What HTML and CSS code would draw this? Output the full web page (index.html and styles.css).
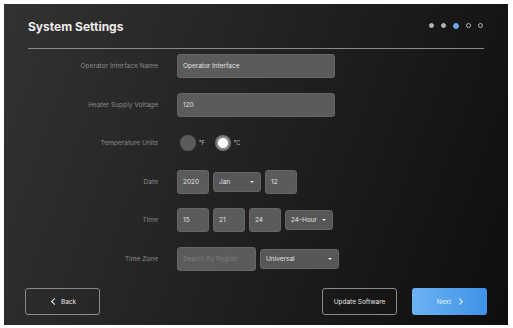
FILE: index.html
```html
<!DOCTYPE html>
<html lang="en">
<head>
    <meta charset="UTF-8">
    <meta name="viewport" content="width=device-width, initial-scale=1.0">
    <title>System Settings</title>
    <link rel="stylesheet" href="styles.css">
</head>
<body>
    <div class="panel">
        <div class="header">
            <h1>System Settings</h1>
            <div class="steps">
                <span class="dot done"></span>
                <span class="dot done"></span>
                <span class="dot active"></span>
                <span class="dot"></span>
                <span class="dot"></span>
            </div>
        </div>
        <div class="divider"></div>

        <form class="settings">
            <label class="label">Operator Interface Name</label>
            <div class="field"><div class="box wide">Operator Interface</div></div>

            <label class="label">Heater Supply Voltage</label>
            <div class="field"><div class="box wide">120</div></div>

            <label class="label">Temperature Units</label>
            <div class="field">
                <span class="radio"></span><span class="unit">°F</span>
                <span class="radio checked"></span><span class="unit">°C</span>
            </div>

            <label class="label">Date</label>
            <div class="field">
                <div class="box num">2020</div>
                <div class="box select month">Jan <span class="caret"></span></div>
                <div class="box num">12</div>
            </div>

            <label class="label">Time</label>
            <div class="field">
                <div class="box num">15</div>
                <div class="box num">21</div>
                <div class="box num">24</div>
                <div class="box select hours">24-Hour <span class="caret"></span></div>
            </div>

            <label class="label">Time Zone</label>
            <div class="field">
                <div class="box search">Search By Region</div>
                <div class="box select zone">Universal <span class="caret"></span></div>
            </div>
        </form>

        <div class="footer">
            <button type="button" class="btn outline back"><span class="chev left"></span>Back</button>
            <div class="footer-right">
                <button type="button" class="btn outline">Update Software</button>
                <button type="button" class="btn primary">Next<span class="chev right"></span></button>
            </div>
        </div>
    </div>
</body>
</html>
```

FILE: styles.css
```css
body {
    margin: 0;
    background-color: #fff;
    font-family: 'Inter', 'Noto Sans', sans-serif;
}
.panel {
    margin: 4px 5px 3px 4px;
    height: 321px;
    box-sizing: border-box;
    padding: 0 24px;
    background: linear-gradient(110deg, #323232 0%, #242424 40%, #171717 75%, #0e0e0e 100%);
    display: flex;
    flex-direction: column;
}
.header {
    height: 43px;
    display: flex;
    align-items: center;
    justify-content: space-between;
}
.header h1 {
    margin: 0;
    font-size: 12px;
    font-weight: 700;
    color: #ececec;
    padding-top: 2px;
}
.steps {
    display: flex;
    gap: 7px;
    margin-right: 1px;
}
.dot {
    width: 5px;
    height: 5px;
    border-radius: 50%;
    box-sizing: border-box;
    border: 1px solid #b5b5b5;
}
.dot.done {
    background-color: #b5b5b5;
}
.dot.active {
    background-color: #6aa9ee;
    border-color: #6aa9ee;
    width: 6px;
    height: 6px;
}
.divider {
    height: 1px;
    background-color: #8a8a8a;
    margin-top: 1px;
}
.settings {
    display: grid;
    grid-template-columns: 130px 1fr;
    column-gap: 19px;
    row-gap: 14.5px;
    margin-top: 5px;
    grid-auto-rows: 24px;
}
.label {
    font-size: 6.6px;
    color: #8a8a8a;
    text-align: right;
    align-self: center;
}
.field {
    display: flex;
    align-items: center;
    gap: 4px;
}
.box {
    height: 24px;
    box-sizing: border-box;
    background-color: #5b5b5b;
    border: 1px solid #666;
    border-radius: 3px;
    color: #e2e2e2;
    font-size: 6.5px;
    padding: 0 5px;
    display: flex;
    align-items: center;
}
.box.wide {
    width: 158px;
}
.box.num {
    width: 32px;
}
.box.select {
    height: 20px;
    justify-content: space-between;
    padding-right: 6px;
    background-color: #575757;
}
.box.month {
    width: 48px;
}
.box.hours {
    width: 48px;
}
.box.search {
    width: 79px;
    color: #7d7d7d;
}
.box.zone {
    width: 79px;
}
.caret {
    width: 0;
    height: 0;
    border-left: 2px solid transparent;
    border-right: 2px solid transparent;
    border-top: 2px solid #eee;
}
.radio {
    width: 16px;
    height: 16px;
    border-radius: 50%;
    background-color: #5b5b5b;
    margin-left: 3px;
    box-sizing: border-box;
}
.radio.checked {
    margin-left: 6px;
    background: radial-gradient(circle, #fff 0, #fff 4.5px, #8a8a8a 5.5px, #6d6d6d 8px);
}
.unit {
    font-size: 5.5px;
    color: #bbb;
    margin-left: -1px;
}
.footer {
    margin-top: auto;
    margin-bottom: 10px;
    margin-left: -3px;
    margin-right: -3px;
    display: flex;
    justify-content: space-between;
}
.footer-right {
    display: flex;
    gap: 15px;
}
.btn {
    width: 75px;
    height: 27px;
    border-radius: 3px;
    font-family: inherit;
    font-size: 6.5px;
    color: #e6e6e6;
    display: flex;
    align-items: center;
    justify-content: center;
    gap: 4px;
    padding: 0;
    cursor: pointer;
}
.btn.outline {
    background: transparent;
    border: 1px solid #8a8a8a;
}
.btn.primary {
    width: 75px;
    border: none;
    background: linear-gradient(90deg, #6cb3f3, #3f92e8);
    color: #eaf4ff;
}
.chev {
    width: 4px;
    height: 4px;
    border-top: 1.2px solid #eee;
    border-left: 1.2px solid #eee;
}
.chev.left {
    transform: rotate(-45deg);
    margin-left: 3px;
}
.chev.right {
    transform: rotate(135deg);
    margin-left: 2px;
}
```
